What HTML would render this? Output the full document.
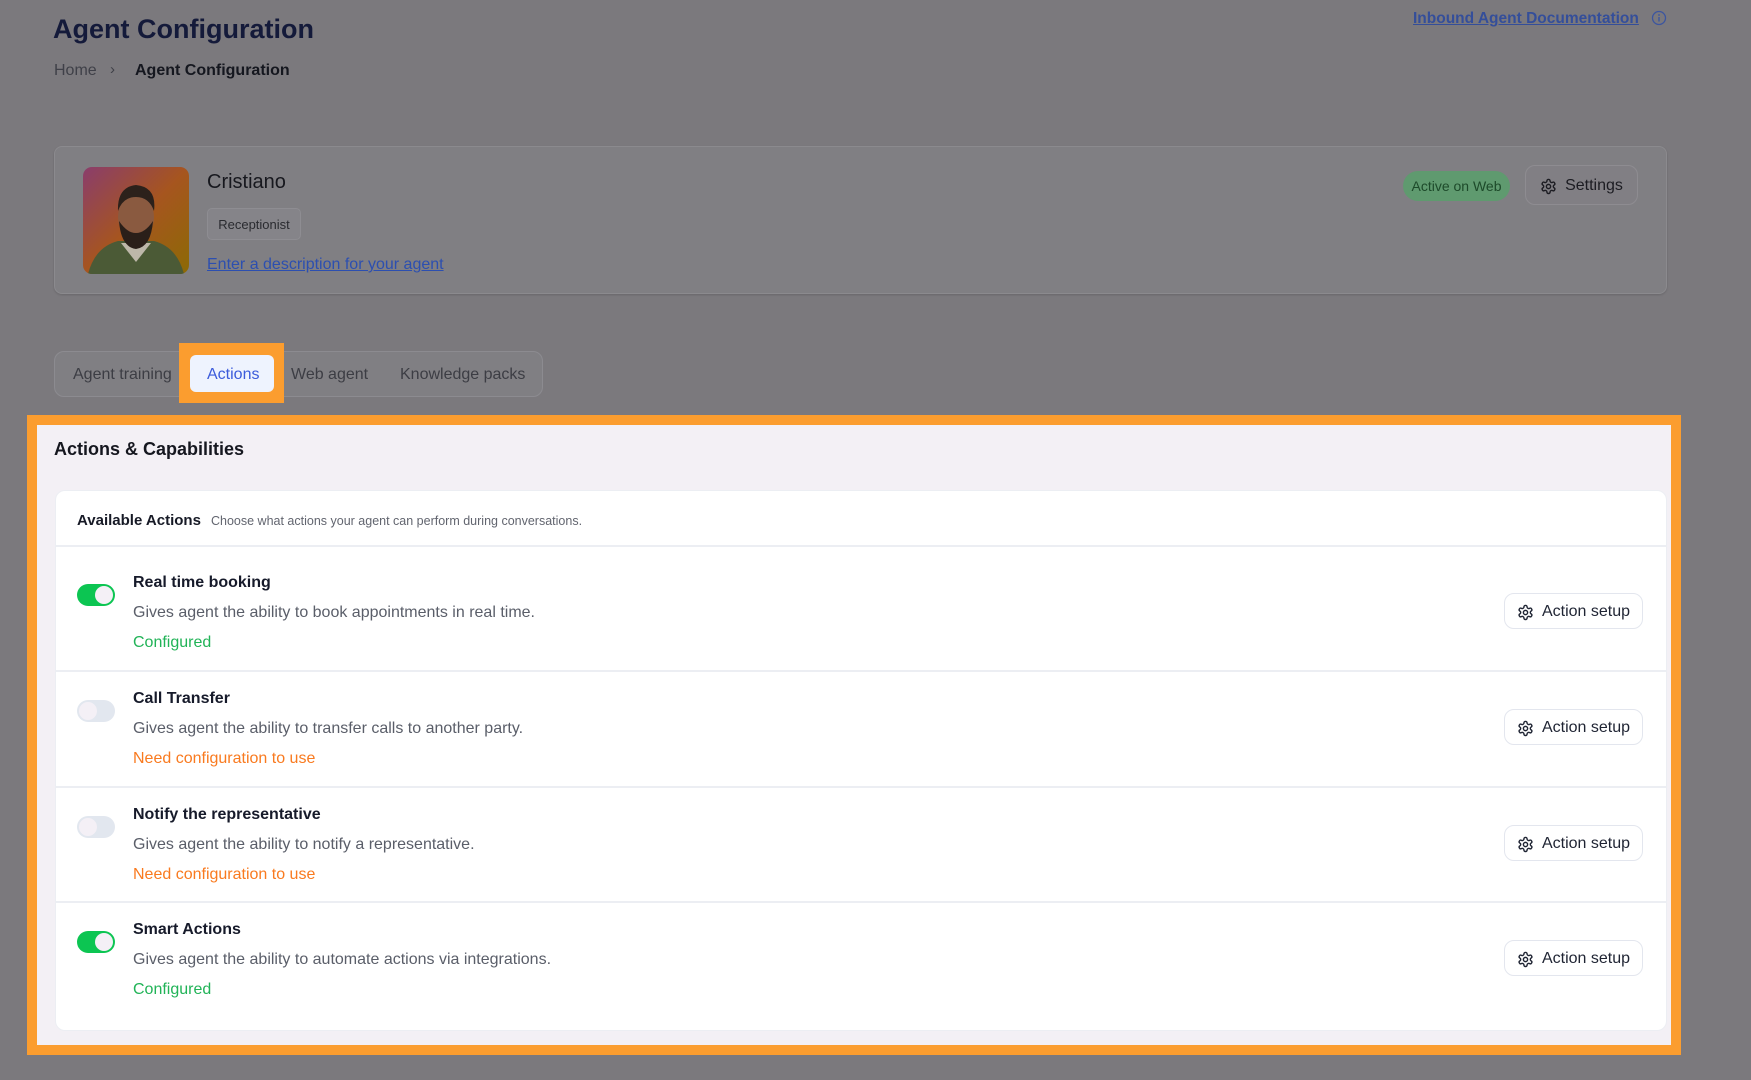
<!DOCTYPE html>
<html><head><meta charset="utf-8"><style>
*{margin:0;padding:0;box-sizing:border-box}
body{width:1751px;height:1080px;background:#7b797d;font-family:"Liberation Sans",sans-serif;position:relative;overflow:hidden}
.a{position:absolute;white-space:nowrap}
.gear{width:17px;height:17px}
.btn{position:absolute;background:#fff;border:1px solid #e3e6ee;border-radius:10px;display:flex;align-items:center;justify-content:center;gap:8px;font-size:16px;color:#1f2433}
.tog{position:absolute;width:38px;height:22px;border-radius:11px}
.tog::after{content:"";position:absolute;top:2px;width:18px;height:18px;border-radius:50%;background:#f4f0f6}
.on{background:#0cc552}.on::after{right:2px}
.off{background:#e2e7ef}.off::after{left:2px}
.t{font-size:16px;font-weight:bold;color:#161a2a}
.d{font-size:16px;color:#5a5e69}
.g{font-size:16px;color:#21b357}
.o{font-size:16px;color:#f97a1f}
.div{position:absolute;left:55px;width:1612px;height:2px;background:#eceef3}
</style></head><body>
<div class="a" style="left:53px;top:14px;font-size:27px;font-weight:bold;color:#141a3a">Agent Configuration</div>
<div class="a" style="left:54px;top:62px;font-size:16px;color:#3f4048">Home</div>
<div class="a" style="left:110px;top:61px;font-size:15px;color:#3f4048">›</div>
<div class="a" style="left:135px;top:62px;font-size:16px;font-weight:bold;color:#15171f">Agent Configuration</div>
<div class="a" style="left:1413px;top:10px;font-size:15.5px;font-weight:bold;color:#344e9a;text-decoration:underline">Inbound Agent Documentation</div>
<svg class="a" style="left:1651px;top:10px" width="16" height="16" viewBox="0 0 16 16"><circle cx="8" cy="8" r="6.5" fill="none" stroke="#3b55a0" stroke-width="1.3"/><rect x="7.3" y="7" width="1.4" height="4.5" fill="#3b55a0"/><circle cx="8" cy="5" r=".9" fill="#3b55a0"/></svg>

<div class="a" style="left:54px;top:146px;width:1613px;height:148px;background:#807f83;border:1px solid #8b8a8e;border-radius:8px;box-shadow:0 1px 2px rgba(0,0,0,.15)"></div>
<svg class="a" style="left:83px;top:167px;border-radius:9px" width="106" height="107" viewBox="0 0 106 107"><defs><linearGradient id="bg" x1="0" y1="0" x2="1" y2="1"><stop offset="0" stop-color="#8a3d6c"/><stop offset=".5" stop-color="#a6551f"/><stop offset="1" stop-color="#8c6a05"/></linearGradient></defs><rect width="106" height="107" fill="url(#bg)"/><path d="M5 107 Q12 80 35 74 L71 74 Q94 80 101 107Z" fill="#4b5a36"/><path d="M38 76 L53 95 L68 76Z" fill="#bdb7a9"/><ellipse cx="53" cy="50" rx="18" ry="23" fill="#8a5a40"/><path d="M35 44 Q34 20 53 18 Q74 20 71 44 Q66 30 53 30 Q40 30 35 44Z" fill="#2c211b"/><path d="M36 54 Q38 80 53 82 Q68 80 70 54 Q62 66 53 66 Q44 66 36 54Z" fill="#2a1f19"/></svg>
<div class="a" style="left:207px;top:171px;font-size:20px;color:#17181e">Cristiano</div>
<div class="a" style="left:207px;top:208px;width:94px;height:32px;background:#858489;border:1px solid #8e8d92;border-radius:5px;font-size:13px;color:#2a2b30;text-align:center;line-height:31px">Receptionist</div>
<div class="a" style="left:207px;top:256px;font-size:16px;color:#2c4fb0;text-decoration:underline">Enter a description for your agent</div>
<div class="a" style="left:1403px;top:171px;width:107px;height:30px;background:#5f9a6f;border-radius:15px;font-size:14px;color:#1d4a2a;text-align:center;line-height:31px">Active on Web</div>
<div class="btn" style="left:1525px;top:165px;width:113px;height:40px;background:#817f84;border-color:#8e8c91;color:#1c1c22;padding-top:2px">
<svg class="gear" viewBox="0 0 24 24" fill="none" stroke="#1c1c22" stroke-width="2"><path d="M12.2 2h-.4a2 2 0 0 0-2 2v.2a2 2 0 0 1-1 1.7l-.4.3a2 2 0 0 1-2 0l-.2-.1a2 2 0 0 0-2.7.7l-.2.4a2 2 0 0 0 .7 2.7l.2.1a2 2 0 0 1 1 1.7v.5a2 2 0 0 1-1 1.7l-.2.1a2 2 0 0 0-.7 2.7l.2.4a2 2 0 0 0 2.7.7l.2-.1a2 2 0 0 1 2 0l.4.3a2 2 0 0 1 1 1.7v.2a2 2 0 0 0 2 2h.4a2 2 0 0 0 2-2v-.2a2 2 0 0 1 1-1.7l.4-.3a2 2 0 0 1 2 0l.2.1a2 2 0 0 0 2.7-.7l.2-.4a2 2 0 0 0-.7-2.7l-.2-.1a2 2 0 0 1-1-1.7v-.5a2 2 0 0 1 1-1.7l.2-.1a2 2 0 0 0 .7-2.7l-.2-.4a2 2 0 0 0-2.7-.7l-.2.1a2 2 0 0 1-2 0l-.4-.3a2 2 0 0 1-1-1.7V4a2 2 0 0 0-2-2z"/><circle cx="12" cy="12" r="3"/></svg>Settings</div>

<div class="a" style="left:54px;top:351px;width:489px;height:46px;background:#807f83;border:1px solid #8c8b90;border-radius:10px"></div>
<div class="a" style="left:73px;top:366px;font-size:16px;color:#3c3d44">Agent training</div>
<div class="a" style="left:179px;top:343px;width:105px;height:60px;background:#fb9d2f"></div>
<div class="a" style="left:190px;top:355px;width:84px;height:37px;background:#eef3fe;border-radius:6px"></div>
<div class="a" style="left:207px;top:366px;font-size:16px;color:#3b5bdb">Actions</div>
<div class="a" style="left:291px;top:366px;font-size:16px;color:#3c3d44">Web agent</div>
<div class="a" style="left:400px;top:366px;font-size:16px;color:#3c3d44">Knowledge packs</div>

<div class="a" style="left:27px;top:415px;width:1654px;height:640px;background:#f3f0f5;border:10px solid #fb9d2f"></div>
<div class="a" style="left:54px;top:439px;font-size:18px;font-weight:bold;color:#15171f">Actions &amp; Capabilities</div>
<div class="a" style="left:55px;top:490px;width:1612px;height:541px;background:#fff;border:1px solid #eceef3;border-radius:10px"></div>
<div class="a" style="left:77px;top:512px;font-size:15px;font-weight:bold;color:#171a26">Available Actions</div>
<div class="a" style="left:211px;top:514px;font-size:12.5px;color:#62656f">Choose what actions your agent can perform during conversations.</div>
<div class="div" style="top:545px"></div>
<div class="div" style="top:670px"></div>
<div class="div" style="top:786px"></div>
<div class="div" style="top:901px"></div>

<div class="tog on" style="left:77px;top:584px"></div>
<div class="a t" style="left:133px;top:574px">Real time booking</div>
<div class="a d" style="left:133px;top:604px">Gives agent the ability to book appointments in real time.</div>
<div class="a g" style="left:133px;top:634px">Configured</div>

<div class="tog off" style="left:77px;top:700px"></div>
<div class="a t" style="left:133px;top:690px">Call Transfer</div>
<div class="a d" style="left:133px;top:720px">Gives agent the ability to transfer calls to another party.</div>
<div class="a o" style="left:133px;top:750px">Need configuration to use</div>

<div class="tog off" style="left:77px;top:816px"></div>
<div class="a t" style="left:133px;top:806px">Notify the representative</div>
<div class="a d" style="left:133px;top:836px">Gives agent the ability to notify a representative.</div>
<div class="a o" style="left:133px;top:866px">Need configuration to use</div>

<div class="tog on" style="left:77px;top:931px"></div>
<div class="a t" style="left:133px;top:921px">Smart Actions</div>
<div class="a d" style="left:133px;top:951px">Gives agent the ability to automate actions via integrations.</div>
<div class="a g" style="left:133px;top:981px">Configured</div>

<div class="btn" style="left:1504px;top:593px;width:139px;height:36px;padding-top:2px"><svg class="gear" viewBox="0 0 24 24" fill="none" stroke="#1f2433" stroke-width="2"><path d="M12.2 2h-.4a2 2 0 0 0-2 2v.2a2 2 0 0 1-1 1.7l-.4.3a2 2 0 0 1-2 0l-.2-.1a2 2 0 0 0-2.7.7l-.2.4a2 2 0 0 0 .7 2.7l.2.1a2 2 0 0 1 1 1.7v.5a2 2 0 0 1-1 1.7l-.2.1a2 2 0 0 0-.7 2.7l.2.4a2 2 0 0 0 2.7.7l.2-.1a2 2 0 0 1 2 0l.4.3a2 2 0 0 1 1 1.7v.2a2 2 0 0 0 2 2h.4a2 2 0 0 0 2-2v-.2a2 2 0 0 1 1-1.7l.4-.3a2 2 0 0 1 2 0l.2.1a2 2 0 0 0 2.7-.7l.2-.4a2 2 0 0 0-.7-2.7l-.2-.1a2 2 0 0 1-1-1.7v-.5a2 2 0 0 1 1-1.7l.2-.1a2 2 0 0 0 .7-2.7l-.2-.4a2 2 0 0 0-2.7-.7l-.2.1a2 2 0 0 1-2 0l-.4-.3a2 2 0 0 1-1-1.7V4a2 2 0 0 0-2-2z"/><circle cx="12" cy="12" r="3"/></svg>Action setup</div>
<div class="btn" style="left:1504px;top:709px;width:139px;height:36px;padding-top:2px"><svg class="gear" viewBox="0 0 24 24" fill="none" stroke="#1f2433" stroke-width="2"><path d="M12.2 2h-.4a2 2 0 0 0-2 2v.2a2 2 0 0 1-1 1.7l-.4.3a2 2 0 0 1-2 0l-.2-.1a2 2 0 0 0-2.7.7l-.2.4a2 2 0 0 0 .7 2.7l.2.1a2 2 0 0 1 1 1.7v.5a2 2 0 0 1-1 1.7l-.2.1a2 2 0 0 0-.7 2.7l.2.4a2 2 0 0 0 2.7.7l.2-.1a2 2 0 0 1 2 0l.4.3a2 2 0 0 1 1 1.7v.2a2 2 0 0 0 2 2h.4a2 2 0 0 0 2-2v-.2a2 2 0 0 1 1-1.7l.4-.3a2 2 0 0 1 2 0l.2.1a2 2 0 0 0 2.7-.7l.2-.4a2 2 0 0 0-.7-2.7l-.2-.1a2 2 0 0 1-1-1.7v-.5a2 2 0 0 1 1-1.7l.2-.1a2 2 0 0 0 .7-2.7l-.2-.4a2 2 0 0 0-2.7-.7l-.2.1a2 2 0 0 1-2 0l-.4-.3a2 2 0 0 1-1-1.7V4a2 2 0 0 0-2-2z"/><circle cx="12" cy="12" r="3"/></svg>Action setup</div>
<div class="btn" style="left:1504px;top:825px;width:139px;height:36px;padding-top:2px"><svg class="gear" viewBox="0 0 24 24" fill="none" stroke="#1f2433" stroke-width="2"><path d="M12.2 2h-.4a2 2 0 0 0-2 2v.2a2 2 0 0 1-1 1.7l-.4.3a2 2 0 0 1-2 0l-.2-.1a2 2 0 0 0-2.7.7l-.2.4a2 2 0 0 0 .7 2.7l.2.1a2 2 0 0 1 1 1.7v.5a2 2 0 0 1-1 1.7l-.2.1a2 2 0 0 0-.7 2.7l.2.4a2 2 0 0 0 2.7.7l.2-.1a2 2 0 0 1 2 0l.4.3a2 2 0 0 1 1 1.7v.2a2 2 0 0 0 2 2h.4a2 2 0 0 0 2-2v-.2a2 2 0 0 1 1-1.7l.4-.3a2 2 0 0 1 2 0l.2.1a2 2 0 0 0 2.7-.7l.2-.4a2 2 0 0 0-.7-2.7l-.2-.1a2 2 0 0 1-1-1.7v-.5a2 2 0 0 1 1-1.7l.2-.1a2 2 0 0 0 .7-2.7l-.2-.4a2 2 0 0 0-2.7-.7l-.2.1a2 2 0 0 1-2 0l-.4-.3a2 2 0 0 1-1-1.7V4a2 2 0 0 0-2-2z"/><circle cx="12" cy="12" r="3"/></svg>Action setup</div>
<div class="btn" style="left:1504px;top:940px;width:139px;height:36px;padding-top:2px"><svg class="gear" viewBox="0 0 24 24" fill="none" stroke="#1f2433" stroke-width="2"><path d="M12.2 2h-.4a2 2 0 0 0-2 2v.2a2 2 0 0 1-1 1.7l-.4.3a2 2 0 0 1-2 0l-.2-.1a2 2 0 0 0-2.7.7l-.2.4a2 2 0 0 0 .7 2.7l.2.1a2 2 0 0 1 1 1.7v.5a2 2 0 0 1-1 1.7l-.2.1a2 2 0 0 0-.7 2.7l.2.4a2 2 0 0 0 2.7.7l.2-.1a2 2 0 0 1 2 0l.4.3a2 2 0 0 1 1 1.7v.2a2 2 0 0 0 2 2h.4a2 2 0 0 0 2-2v-.2a2 2 0 0 1 1-1.7l.4-.3a2 2 0 0 1 2 0l.2.1a2 2 0 0 0 2.7-.7l.2-.4a2 2 0 0 0-.7-2.7l-.2-.1a2 2 0 0 1-1-1.7v-.5a2 2 0 0 1 1-1.7l.2-.1a2 2 0 0 0 .7-2.7l-.2-.4a2 2 0 0 0-2.7-.7l-.2.1a2 2 0 0 1-2 0l-.4-.3a2 2 0 0 1-1-1.7V4a2 2 0 0 0-2-2z"/><circle cx="12" cy="12" r="3"/></svg>Action setup</div>
</body></html>
